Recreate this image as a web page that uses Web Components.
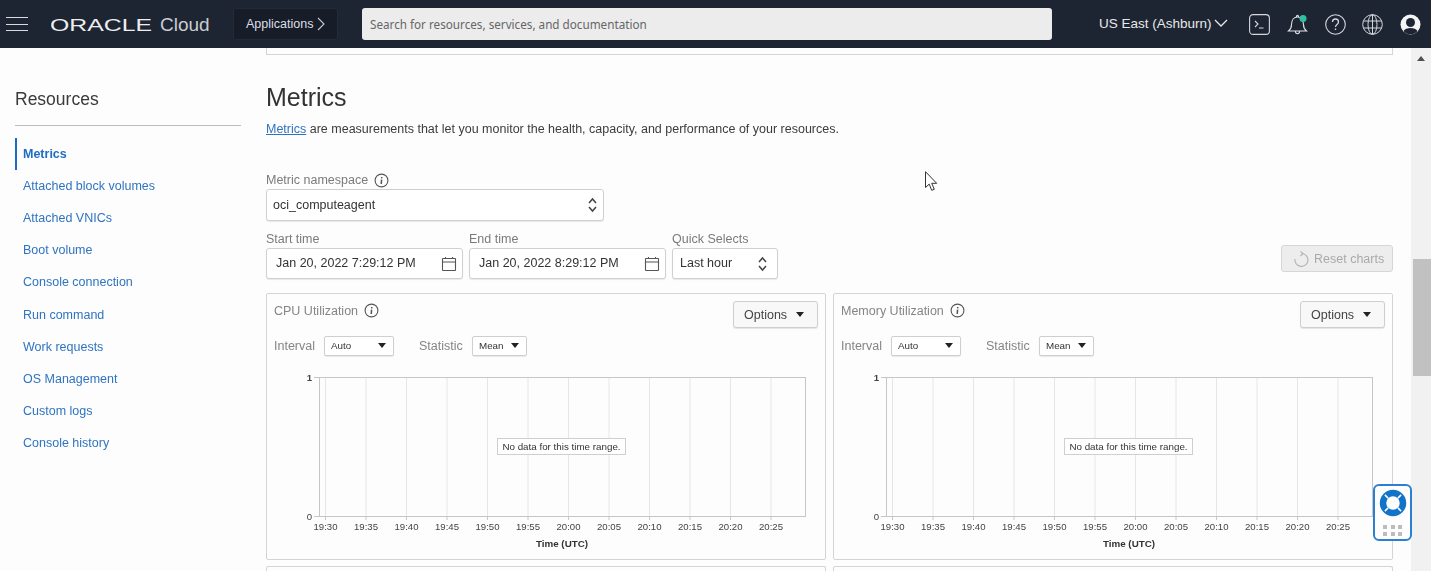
<!DOCTYPE html>
<html>
<head>
<meta charset="utf-8">
<title>Metrics</title>
<style>
html, body { margin: 0; height: 100%; overflow: hidden; }
body { font-family: "Liberation Sans", Arial, sans-serif; background: #fdfdfe; color: #333; }
</style>
</head>
<body>
<oci-page>
    <oci-header slot="header"></oci-header>
    <oci-resources slot="side" active="Metrics">
        <a href="#">Metrics</a>
        <a href="#">Attached block volumes</a>
        <a href="#">Attached VNICs</a>
        <a href="#">Boot volume</a>
        <a href="#">Console connection</a>
        <a href="#">Run command</a>
        <a href="#">Work requests</a>
        <a href="#">OS Management</a>
        <a href="#">Custom logs</a>
        <a href="#">Console history</a>
    </oci-resources>
    <oci-metrics></oci-metrics>
</oci-page>
<oci-help></oci-help>
<oci-cursor></oci-cursor>

<script>
const updown = `<svg width="9" height="16" viewBox="0 0 9 16" fill="none" stroke="#444" stroke-width="1.5"><path d="M1 6l3.5-4L8 6M1 10l3.5 4L8 10"/></svg>`
const infoIcon = `<svg width="15" height="15" viewBox="0 0 15 15" fill="none" stroke="#555" stroke-width="1.1"><circle cx="7.5" cy="7.5" r="6.4"/><path d="M7.6 6.6L7.2 11" stroke-width="1.5"/><path d="M7.7 4v1.4" stroke-width="1.5"/></svg>`
const calIcon = `<svg width="16" height="16" viewBox="0 0 16 16" fill="none" stroke="#555" stroke-width="1.1"><rect x="1.5" y="2.5" width="13" height="12" rx=".5"/><path d="M1.5 6h13M4.5 1v2M11.5 1v2"/></svg>`

class OciPage extends HTMLElement {
    constructor() {
        super()
        this.attachShadow({mode: "open"}).innerHTML = `
            <style>
            :host { display: flex; flex-direction: column; width: 1431px; height: 571px; overflow: hidden; filter: blur(.3px); }
            .body { flex: 1; display: flex; min-height: 0; }
            .side { width: 251px; padding-left: 15px; flex: none; }
            .main { width: 1127px; flex: none; }
            .gap { width: 18px; flex: none; }
            .track { width: 20px; flex: none; background: #f1f1f1; display: flex; flex-direction: column; align-items: center; }
            .arrow { margin-top: 8px; width: 0; height: 0; border: 4px solid transparent; border-top: 0; border-bottom: 5px solid #505050; }
            .thumb { margin-top: 198px; width: 18px; margin-left: 2px; height: 117px; background: #c1c1c1; }
            </style>
            <slot name="header"></slot>
            <div class="body">
                <div class="side"><slot name="side"></slot></div>
                <div class="main"><slot></slot></div>
                <div class="gap"></div>
                <div class="track"><div class="arrow"></div><div class="thumb"></div></div>
            </div>
        `
    }
}
customElements.define("oci-page", OciPage)

class OciHeader extends HTMLElement {
    constructor() {
        super()
        this.attachShadow({mode: "open"}).innerHTML = `
            <style>
            :host { display: flex; align-items: center; height: 48px; background: #1d2533; color: #e8e8e8; flex: none; font-family: "Liberation Sans", Arial, sans-serif; }
            .burger { margin-left: 6px; width: 22px; height: 14px; display: flex; flex-direction: column; justify-content: space-between; }
            .burger i { display: block; height: 1px; background: #d8dade; }
            .logo { margin-left: 23px; display: block; }
            .apps { margin-left: 22px; width: 105px; height: 32px; box-sizing: border-box; background: #161c28; border: 1px solid #232b39; border-radius: 3px; display: flex; align-items: center; gap: 4px; padding-left: 12px; font-size: 12.5px; color: #dcdfe3; margin-top: -1px; }
            .search { margin-left: 24px; width: 690px; height: 32px; box-sizing: border-box; background: #ececec; border-radius: 3px; padding-left: 8px; display: flex; align-items: center; font: 11.7px "Noto Sans", sans-serif; color: #666; }
            .region { margin-left: 47px; font-size: 13.5px; color: #e8e8e8; display: flex; align-items: center; gap: 2px; width: 130px; margin-top: -1px; }
            .icons { margin-left: 20px; display: flex; gap: 16.75px; align-items: center; }
            svg { display: block; }
            </style>
            <div class="burger"><i></i><i></i><i></i></div>
            <svg class="logo" width="160" height="28" viewBox="0 0 160 28">
                <text x="-1" y="20.5" font-family="Liberation Sans" font-size="16.5" fill="#eceef0" textLength="102" lengthAdjust="spacingAndGlyphs">ORACLE</text>
                <text x="109" y="21" font-family="Liberation Sans" font-size="19" fill="#c9ccd1">Cloud</text>
            </svg>
            <div class="apps">Applications <svg width="8" height="14" viewBox="0 0 8 14" fill="none" stroke="#c5c8cd" stroke-width="1.1"><path d="M1 1l6 6-6 6"/></svg></div>
            <div class="search">Search for resources, services, and documentation</div>
            <div class="region">US East (Ashburn) <svg width="14" height="9" viewBox="0 0 14 9" fill="none" stroke="#e8e8e8" stroke-width="1.3"><path d="M1 1l6 6 6-6"/></svg></div>
            <div class="icons">
                <svg width="21" height="21" viewBox="0 0 21 21" fill="none" stroke="#d5d7db" stroke-width="1.1"><rect x=".6" y=".6" width="19.8" height="19.8" rx="3.5"/><path d="M6 7l3 3-3 3M10 14h4.5"/></svg>
                <svg width="21" height="21" viewBox="0 0 21 21" fill="none" stroke="#e0e2e5" stroke-width="1.1"><path d="M1.5 17c2-1.5 3-3 3-6.5C4.5 6 7 3 10.5 3s6 3 6 7.5c0 3.5 1 5 3 6.5zM8.5 17.5c0 3 4 3 4 0M9.5 2.8c0-2 2-2 2 0"/><circle cx="16" cy="4.5" r="3.5" fill="#2fc0a0" stroke="none"/></svg>
                <svg width="21" height="21" viewBox="0 0 21 21" fill="none" stroke="#d5d7db" stroke-width="1.1"><circle cx="10.5" cy="10.5" r="9.8"/><path d="M7.5 8c0-4 6-4 6 0 0 2.5-3 2.500-3 5" stroke-width="1.3"/><path d="M10.5 14.5v1.5" stroke-width="1.4"/></svg>
                <svg width="21" height="21" viewBox="0 0 21 21" fill="none" stroke="#d5d7db" stroke-width="1"><circle cx="10.5" cy="10.5" r="9.8"/><ellipse cx="10.5" cy="10.5" rx="4.5" ry="9.8"/><path d="M1.5 7h18M1.5 14h18M10.5 .7v19.6"/></svg>
                <svg width="21" height="21" viewBox="0 0 21 21"><circle cx="10.5" cy="10.5" r="10" fill="#f4f4f4"/><circle cx="10.5" cy="8.5" r="4.5" fill="#1d2533"/><path d="M3.5 17c2-4 12-4 14 0a9 9 0 0 1-14 0z" fill="#1d2533"/></svg>
            </div>
        `
    }
}
customElements.define("oci-header", OciHeader)

class OciResources extends HTMLElement {
    constructor() {
        super()
        this.attachShadow({mode: "open"}).innerHTML = `
            <style>
            :host { display: block; width: 226px; font-family: "Liberation Sans", Arial, sans-serif; }
            h2 { margin: 41px 0 0; font-size: 17.5px; font-weight: normal; line-height: 21px; color: #3a3a3a; padding-bottom: 15px; border-bottom: 1px solid #bdbdbd; }
            nav { margin-top: 11.7px; display: flex; flex-direction: column; }
            ::slotted(a) { display: block; height: 32.2px; line-height: 32.2px; padding-left: 8px; font-size: 12.5px; color: #2f74c0; text-decoration: none; }
            ::slotted(a.on) { font-weight: bold; color: #1f6dc4; border-left: 2px solid #1a6cc4; padding-left: 6px; }
            </style>
            <h2>Resources</h2>
            <nav><slot></slot></nav>
        `
    }
    connectedCallback() {
        const name = this.getAttribute("active")
        this.querySelectorAll("a").forEach(a => { if (a.textContent == name) a.className = "on" })
    }
}
customElements.define("oci-resources", OciResources)

class OciField extends HTMLElement {
    constructor() {
        super()
        this.attachShadow({mode: "open"}).innerHTML = `
            <style>
            :host { display: block; font-family: "Liberation Sans", Arial, sans-serif; }
            label { display: flex; align-items: center; gap: 6px; height: 18px; margin-bottom: 0; font-size: 12.5px; color: #7b7b7b; }
            .box { box-sizing: border-box; height: var(--h, 32px); border: 1px solid #d0d0d0; border-radius: 3px; background: #fff; display: flex; align-items: center; justify-content: space-between; padding: 0 var(--pr, 6px) 0 var(--pl, 6px); font-size: 12.5px; color: #333; box-shadow: 0 1px 1px #e8e8e8; }
            .txt { margin-top: -1px; }
            svg { display: block; }
            </style>
            <label></label>
            <div class="box"><span class="txt"><slot></slot></span><span class="ic"></span></div>
        `
    }
    connectedCallback() {
        const root = this.shadowRoot
        root.querySelector("label").innerHTML = this.getAttribute("label") + (this.hasAttribute("info") ? " " + infoIcon : "")
        root.querySelector(".ic").innerHTML = this.getAttribute("icon") == "cal" ? calIcon : updown
    }
}
customElements.define("oci-field", OciField)

class OciMiniSelect extends HTMLElement {
    constructor() {
        super()
        this.attachShadow({mode: "open"}).innerHTML = `
            <style>
            :host { display: flex; align-items: center; justify-content: space-between; box-sizing: border-box; height: 20px; padding: 0 7px 0 6px; border: 1px solid #cfcfcf; border-radius: 2px; background: #fff; font-size: 9.8px; color: #333; box-shadow: 0 1px 1px #e8e8e8; margin-top: -1px; }
            i { width: 0; height: 0; border: 4.5px solid transparent; border-top: 5px solid #222; border-bottom: 0; }
            </style>
            <slot></slot><i></i>
        `
    }
}
customElements.define("oci-mini-select", OciMiniSelect)

class OciChart extends HTMLElement {
    constructor() {
        super()
        this.attachShadow({mode: "open"}).innerHTML = `
            <style>
            :host { display: block; box-sizing: border-box; width: 560px; height: 267px; border: 1px solid #d4d4d4; border-radius: 2px; background: #fdfdfe; font-family: "Liberation Sans", Arial, sans-serif; }
            .top { display: flex; justify-content: space-between; padding: 7px 7px 0 7px; height: 35px; box-sizing: border-box; }
            .title { display: flex; align-items: center; gap: 6px; height: 19px; font-size: 12.5px; color: #858585; }
            .opt { box-sizing: border-box; width: 85px; height: 27px; border: 1px solid #cfcfcf; border-radius: 3px; background: #f8f8f9; display: flex; align-items: center; gap: 9px; padding-left: 10px; font-size: 12.5px; color: #444; box-shadow: 0 1px 1px #e4e4e4; }
            .opt i { width: 0; height: 0; border: 4.5px solid transparent; border-top: 5px solid #222; border-bottom: 0; }
            .filters { display: flex; align-items: center; height: 20px; margin-top: 7px; padding-left: 7px; font-size: 12.5px; color: #858585; }
            .filters span { width: 50px; }
            .filters .st { width: 53px; margin-left: 25px; }
            svg.plot { display: block; margin-top: 9px; }
            svg text { font-family: "Liberation Sans", Arial, sans-serif; }
            </style>
            <div class="top">
                <div class="title"><span class="t"></span>${infoIcon}</div>
                <div class="opt">Options <i></i></div>
            </div>
            <div class="filters">
                <span>Interval</span>
                <oci-mini-select style="width:70px">Auto</oci-mini-select>
                <span class="st">Statistic</span>
                <oci-mini-select style="width:55px">Mean</oci-mini-select>
            </div>
            <svg class="plot" width="558" height="192"></svg>
        `
    }
    connectedCallback() {
        const root = this.shadowRoot
        root.querySelector(".t").textContent = this.getAttribute("title")
        const times = ["19:30","19:35","19:40","19:45","19:50","19:55","20:00","20:05","20:10","20:15","20:20","20:25"]
        let s = ""
        times.forEach((t, i) => {
            const x = 58.5 + i * 40.5
            s += `<line x1="${x}" y1="12" x2="${x}" y2="151" stroke="#e6e6e6"/>`
            s += `<line x1="${x}" y1="151" x2="${x}" y2="155" stroke="#c8c8c8"/>`
            s += `<text x="${x}" y="165" font-size="9.6" fill="#444" text-anchor="middle">${t}</text>`
        })
        s += `<rect x="52.5" y="12.5" width="486" height="139" fill="none" stroke="#c6c6c6"/>`
        s += `<line x1="47" y1="12.5" x2="52" y2="12.5" stroke="#c6c6c6"/><line x1="47" y1="151.5" x2="52" y2="151.5" stroke="#c6c6c6"/>`
        s += `<text x="45" y="16" font-size="9.6" font-weight="bold" fill="#444" text-anchor="end">1</text>`
        s += `<text x="45" y="155" font-size="9.6" fill="#444" text-anchor="end">0</text>`
        s += `<text x="295" y="181.5" font-size="9.8" font-weight="bold" fill="#333" text-anchor="middle">Time (UTC)</text>`
        s += `<rect x="230.5" y="73.5" width="128" height="16" fill="#fff" stroke="#cfcfcf"/>`
        s += `<text x="294.5" y="84.5" font-size="9.8" fill="#333" text-anchor="middle">No data for this time range.</text>`
        root.querySelector("svg.plot").innerHTML = s
    }
}
customElements.define("oci-chart", OciChart)

class OciMetrics extends HTMLElement {
    constructor() {
        super()
        this.attachShadow({mode: "open"}).innerHTML = `
            <style>
            :host { display: block; font-family: "Liberation Sans", Arial, sans-serif; }
            .prev { height: 7px; box-sizing: border-box; border: 1px solid #d4d4d4; border-top: 0; }
            h1 { margin: 27px 0 0; font-size: 25px; font-weight: normal; line-height: 30px; color: #333; }
            p { margin: 9px 0 0; font-size: 12.5px; line-height: 16px; color: #3c3c3c; }
            p a { color: #2f74c0; }
            .ns { margin-top: 34px; width: 338px; }
            .times { display: flex; gap: 6px; margin-top: 9px; align-items: flex-start; }
            .reset { margin-left: auto; margin-top: 15px; box-sizing: border-box; width: 112px; height: 27px; border: 1px solid #d6d6d6; border-radius: 3px; background: #ededed; color: #a9a9a9; font-size: 12.5px; display: flex; align-items: center; gap: 5px; padding-left: 11px; }
            .charts { display: grid; grid-template-columns: 560px 560px; column-gap: 7px; row-gap: 6px; margin-top: 14px; }
            .stub { height: 20px; box-sizing: border-box; border: 1px solid #d4d4d4; border-bottom: 0; border-radius: 2px; }
            </style>
            <div class="prev"></div>
            <h1>Metrics</h1>
            <p><a href="#">Metrics</a> are measurements that let you monitor the health, capacity, and performance of your resources.</p>
            <oci-field class="ns" label="Metric namespace" info>oci_computeagent</oci-field>
            <div class="times">
                <oci-field style="width:197px;--h:31px;--pl:9px;--pr:5px" label="Start time" icon="cal">Jan 20, 2022 7:29:12 PM</oci-field>
                <oci-field style="width:197px;--h:31px;--pl:9px;--pr:5px" label="End time" icon="cal">Jan 20, 2022 8:29:12 PM</oci-field>
                <oci-field style="width:106px;--h:31px;--pl:7px;--pr:10px" label="Quick Selects">Last hour</oci-field>
                <div class="reset"><svg width="16" height="16" viewBox="0 0 16 16" fill="none" stroke="#b4b4b4" stroke-width="1.1"><path d="M9.5 2.5A6.5 6.5 0 1 1 2 8"/><path d="M7.5 .5l2.5 2-2.5 2.5"/></svg>Reset charts</div>
            </div>
            <div class="charts">
                <oci-chart title="CPU Utilization"></oci-chart>
                <oci-chart title="Memory Utilization"></oci-chart>
                <div class="stub"></div>
                <div class="stub"></div>
            </div>
        `
    }
}
customElements.define("oci-metrics", OciMetrics)

class OciHelp extends HTMLElement {
    constructor() {
        super()
        this.attachShadow({mode: "open"}).innerHTML = `
            <style>
            :host { position: absolute; left: 1373px; top: 484px; width: 39px; height: 57px; box-sizing: border-box; border: 2px solid #2b80d2; border-radius: 6px; background: #fff; display: flex; flex-direction: column; align-items: center; padding-top: 3px; }
            .dots { margin-top: 8px; display: grid; grid-template-columns: repeat(3, 4px); gap: 3px 3.5px; }
            .dots i { width: 4px; height: 4px; background: #bdbdbd; }
            svg { display: block; }
            </style>
            <svg width="28" height="28" viewBox="0 0 28 28" fill="none"><circle cx="14" cy="14" r="10" stroke="#1274c9" stroke-width="6.5"/><path d="M5.9 5.900l3.200 3.200M22.100 5.900l-3.200 3.200M5.900 22.100l3.200-3.200M22.100 22.100l-3.200-3.200" stroke="#fff" stroke-width="1.500"/></svg>
            <div class="dots"><i></i><i></i><i></i><i></i><i></i><i></i></div>
        `
    }
}
customElements.define("oci-help", OciHelp)

class OciCursor extends HTMLElement {
    constructor() {
        super()
        this.attachShadow({mode: "open"}).innerHTML = `
            <style>
            :host { position: absolute; left: 925px; top: 171px; width: 14px; height: 21px; }
            svg { display: block; }
            </style>
            <svg width="14" height="21" viewBox="0 0 14 21"><path d="M.5.7v15.8l3.7-3.400 2.500 6.200 2.600-1-2.600-6h5z" fill="#fff" stroke="#333" stroke-width="1"/></svg>
        `
    }
}
customElements.define("oci-cursor", OciCursor)
</script>
</body>
</html>
